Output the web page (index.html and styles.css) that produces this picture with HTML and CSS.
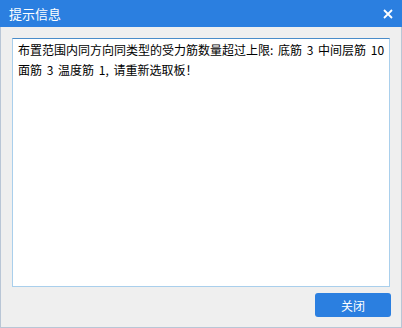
FILE: index.html
```html
<!DOCTYPE html>
<html lang="zh">
<head>
<meta charset="utf-8">
<link rel="stylesheet" href="styles.css">
</head>
<body>
<div class="dialog">
  <div class="titlebar">
    <span class="title">提示信息</span>
    <svg class="close" width="10" height="10" viewBox="0 0 10 10"><path d="M1 1L9 9M9 1L1 9" stroke="#fff" stroke-width="1.8" fill="none"/></svg>
  </div>
  <div class="body">
    <div class="message">布置范围内同方向同类型的受力筋数量超过上限: 底筋 3 中间层筋 10<br>面筋 3 温度筋 1, 请重新选取板！</div>
    <div class="footer">
      <button class="btn">关闭</button>
    </div>
  </div>
</div>
</body>
</html>
```
FILE: styles.css
```css
html, body {
  margin: 0;
  padding: 0;
}
body {
  width: 402px;
  height: 328px;
  font-family: "Noto Sans CJK SC", "Noto Sans", sans-serif;
}
.dialog {
  width: 402px;
  height: 328px;
  display: flex;
  flex-direction: column;
  box-sizing: border-box;
}
.titlebar {
  height: 27px;
  flex: none;
  background: #2b7fe0;
  display: flex;
  align-items: center;
  justify-content: space-between;
  padding: 0 9px 0 9px;
}
.title {
  color: #fff;
  font-size: 13px;
  line-height: 27px;
}
.close {
  display: block;
  margin-right: 0;
}
.body {
  flex: 1;
  background: #efefef;
  border: 1px solid #b9c6d6;
  border-top: none;
  padding: 11px 11px 0 11px;
  display: flex;
  flex-direction: column;
}
.message {
  height: 249px;
  box-sizing: border-box;
  background: #fff;
  border: 1px solid #a9cfec;
  border-top-color: #4a8cc9;
  padding: 1px 5px;
  font-size: 12px;
  line-height: 20px;
  word-spacing: 2px;
  white-space: nowrap;
  overflow: hidden;
  color: #000;
}
.footer {
  display: flex;
  justify-content: flex-end;
  padding: 6px 0 0 0;
  margin-right: -1px;
}
.btn {
  width: 76px;
  height: 24px;
  border: none;
  border-radius: 3px;
  background: #2b7fe0;
  color: #fff;
  font-family: "Noto Sans CJK SC", sans-serif;
  font-size: 12px;
  padding: 0;
}
```
